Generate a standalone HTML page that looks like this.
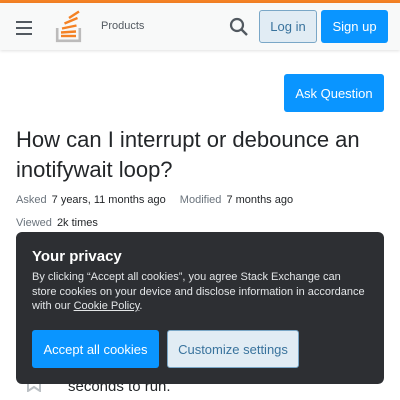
<!DOCTYPE html>
<html><head><style>
*{box-sizing:border-box;margin:0;padding:0}
body{width:400px;height:400px;overflow:hidden;background:#fff;font-family:"Liberation Sans",Arial,sans-serif;position:relative}
.top{position:absolute;top:0;left:0;width:400px;height:3px;background:#f48225}
.hdr{position:absolute;top:3px;left:0;width:400px;height:47px;background:#f8f9f9;box-shadow:0 1px 3px rgba(0,0,0,.12)}
.abs{position:absolute}
.btn{position:absolute;border-radius:3px;font-size:13px;display:flex;align-items:center;justify-content:center}
</style></head><body>
<div class="top"></div>
<div class="hdr">
 <div class="abs" style="left:16px;top:18px;width:16px;height:2px;background:#525960"></div>
 <div class="abs" style="left:16px;top:24px;width:16px;height:2px;background:#525960"></div>
 <div class="abs" style="left:16px;top:30px;width:16px;height:2px;background:#525960"></div>
</div>
<svg class="abs" style="left:55px;top:9px" width="28" height="34" viewBox="0 0 28 34">
  <path d="M2.2 19v12.8h22.6V19" fill="none" stroke="#bcbbbb" stroke-width="2.6"/>
  <g stroke="#f48225" stroke-width="2.4">
   <line x1="6" y1="27" x2="21" y2="27"/>
   <line x1="6" y1="23.5" x2="21" y2="22.5"/>
   <line x1="7" y1="19.5" x2="21.5" y2="16.5"/>
   <line x1="9.5" y1="14.5" x2="22.5" y2="9"/>
   <line x1="14" y1="9" x2="24" y2="2.5"/>
  </g>
</svg>
<div class="abs" style="left:101px;top:20px;font-size:11px;color:#525960">Products</div>
<svg class="abs" style="left:229px;top:17px" width="20" height="20" viewBox="0 0 20 20"><circle cx="8" cy="8" r="6" fill="none" stroke="#525960" stroke-width="2.2"/><line x1="12.5" y1="12.5" x2="18" y2="18" stroke="#525960" stroke-width="2.4"/></svg>
<div class="btn" style="left:259px;top:10px;width:58px;height:33px;background:#e1ecf4;border:1px solid #7aa7c7;color:#39739d">Log in</div>
<div class="btn" style="left:321px;top:10px;width:67px;height:33px;background:#0a95ff;color:#fff">Sign up</div>
<div class="btn" style="left:284px;top:74px;width:100px;height:38px;background:#0a95ff;color:#fff">Ask Question</div>
<div class="abs" style="left:16px;top:125px;font-size:22px;line-height:30px;color:#232629;width:370px">How can I interrupt or debounce an inotifywait loop?</div>
<div class="abs" style="left:16px;top:194px;font-size:11px;color:#6a737c">Asked <span style="color:#232629;margin-left:2px">7 years, 11 months ago</span><span style="margin-left:14px">Modified</span> <span style="color:#232629;margin-left:2px">7 months ago</span></div>
<div class="abs" style="left:16px;top:217px;font-size:11px;color:#6a737c">Viewed <span style="color:#232629;margin-left:2px">2k times</span></div>
<svg class="abs" style="left:27px;top:378px" width="14" height="14" viewBox="0 0 14 14"><path d="M1 0v13l6-4 6 4V0" fill="none" stroke="#bbc0c4" stroke-width="2"/></svg>
<div class="abs" style="left:68px;top:378px;font-size:15px;color:#232629">seconds to run.</div>
<div class="abs" style="left:16px;top:232px;width:368px;height:152px;background:#2d2f33;border-radius:6px">
 <div class="abs" style="left:16px;top:16px;font-size:15px;font-weight:bold;color:#fff">Your privacy</div>
 <div class="abs" style="left:16px;top:38px;width:336px;font-size:11px;line-height:14.5px;color:#e3e6e8">By clicking “Accept all cookies”, you agree Stack Exchange can store cookies on your device and disclose information in accordance with our <u>Cookie Policy</u>.</div>
 <div class="btn" style="left:16px;top:98px;width:127px;height:38px;background:#0a95ff;color:#fff">Accept all cookies</div>
 <div class="btn" style="left:151px;top:98px;width:132px;height:38px;background:#e1ecf4;border:1px solid #7aa7c7;color:#39739d">Customize settings</div>
</div>
</body></html>
